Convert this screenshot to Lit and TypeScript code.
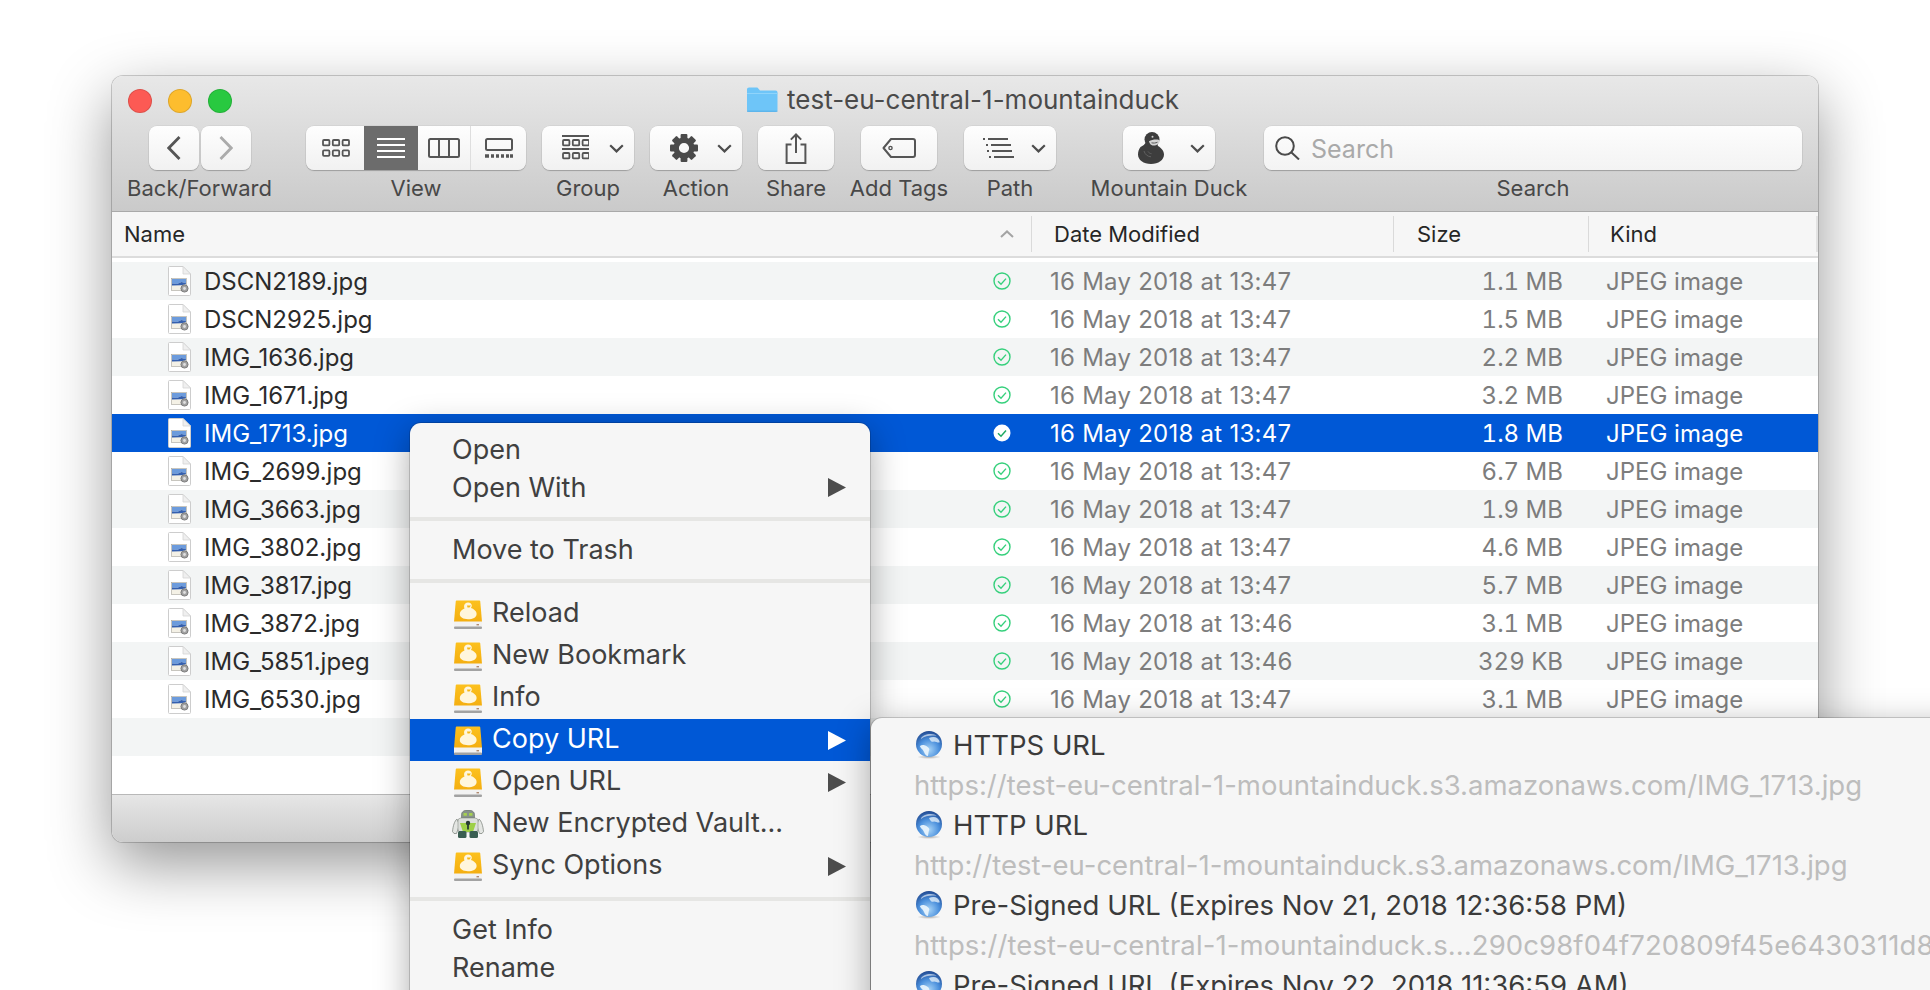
import { LitElement, html, css, svg } from "lit";
import { customElement } from "lit/decorators.js";

const FILES = [
  ["DSCN2189.jpg", "16 May 2018 at 13:47", "1.1 MB"],
  ["DSCN2925.jpg", "16 May 2018 at 13:47", "1.5 MB"],
  ["IMG_1636.jpg", "16 May 2018 at 13:47", "2.2 MB"],
  ["IMG_1671.jpg", "16 May 2018 at 13:47", "3.2 MB"],
  ["IMG_1713.jpg", "16 May 2018 at 13:47", "1.8 MB"],
  ["IMG_2699.jpg", "16 May 2018 at 13:47", "6.7 MB"],
  ["IMG_3663.jpg", "16 May 2018 at 13:47", "1.9 MB"],
  ["IMG_3802.jpg", "16 May 2018 at 13:47", "4.6 MB"],
  ["IMG_3817.jpg", "16 May 2018 at 13:47", "5.7 MB"],
  ["IMG_3872.jpg", "16 May 2018 at 13:46", "3.1 MB"],
  ["IMG_5851.jpeg", "16 May 2018 at 13:46", "329 KB"],
  ["IMG_6530.jpg", "16 May 2018 at 13:47", "3.1 MB"],
];
const SELECTED = 4;

const chevronDown = html`<svg class="chev" width="15" height="9" viewBox="0 0 15 9"><path d="M1.2 1.2 7.5 7.4 13.8 1.2" fill="none" stroke="#4d4d4d" stroke-width="2.2"/></svg>`;

const squares = (y: number) => svg`
  <rect x="1" y="${y}" width="6.4" height="5.4" rx="1"/><rect x="10.8" y="${y}" width="6.4" height="5.4" rx="1"/><rect x="20.6" y="${y}" width="6.4" height="5.4" rx="1"/>`;

const iconGrid = html`<svg width="28" height="20" viewBox="0 0 28 20" fill="none" stroke="#555" stroke-width="1.8">${squares(2)}${squares(12.4)}</svg>`;
const iconList = html`<svg width="28" height="20" viewBox="0 0 28 20" fill="#fff"><rect y="0" width="28" height="2"/><rect y="6" width="28" height="2"/><rect y="12" width="28" height="2"/><rect y="18" width="28" height="2"/></svg>`;
const iconColumns = html`<svg width="32" height="20" viewBox="0 0 32 20" fill="none" stroke="#555" stroke-width="2"><rect x="1" y="1" width="30" height="18" rx="1.5"/><path d="M11 1v18M21 1v18"/></svg>`;
const iconGallery = html`<svg width="28" height="20" viewBox="0 0 28 20" fill="none" stroke="#555" stroke-width="2"><rect x="1" y="1" width="26" height="11" rx="1.5"/><path d="M0 18h4M6 18h3M11 18h3M16 18h3M21 18h3M25 18h3" stroke-width="3.4"/></svg>`;
const iconGroup = html`<svg width="27" height="26" viewBox="0 0 27 26" fill="none" stroke="#555" stroke-width="1.8"><path d="M0 1h27M0 14h27" stroke-width="1.8"/>${squares(5)}${squares(18)}</svg>`;
const iconGear = html`<svg width="28" height="28" viewBox="-14 -14 28 28"><g fill="#4a4a4a">${[0, 45, 90, 135, 180, 225, 270, 315].map(
  (a) => svg`<rect x="-3.4" y="-14" width="6.8" height="8" rx="1" transform="rotate(${a})"/>`,
)}</g><circle r="7.8" fill="none" stroke="#4a4a4a" stroke-width="5.4"/></svg>`;
const iconShare = html`<svg width="22" height="31" viewBox="0 0 22 31" fill="none" stroke="#555" stroke-width="2"><path d="M6.5 11.5H1.6v18.4h18.8V11.5h-4.9"/><path d="M11 20V1.5M5.8 6.6 11 1.5l5.2 5.1"/></svg>`;
const iconTag = html`<svg width="34" height="20" viewBox="0 0 34 20" fill="none" stroke="#555" stroke-width="2"><path d="M9 1h22a2 2 0 0 1 2 2v14a2 2 0 0 1-2 2H9L1.5 10z" stroke-linejoin="round"/><circle cx="8.5" cy="10" r="1.6" stroke-width="1.4"/></svg>`;
const iconPath = html`<svg width="31" height="20" viewBox="0 0 31 20" fill="none" stroke="#555" stroke-width="1.8"><path d="M0 1h2M5 1h20M3 7h2M8 7h20M4 13h2M9 13h20M6 19h2M11 19h20"/></svg>`;
const iconDuck = html`<svg width="26" height="32" viewBox="0 0 26 32">
  <circle cx="14" cy="7.5" r="7.5" fill="#3d3d3d"/>
  <path d="M8 10C7 12 5 14 2.500 15 .8 17 0 20 0 22.500 0 28 5.500 32 13 32s13-4 13-9.500c0-3.500-2.500-6.500-6-8.500l-1-3z" fill="#3d3d3d"/>
  <path d="M11 9.200c3-1.500 6.500-2 10.200-1.300.8 1.800.2 3.200-1.200 4-2 1.700-4.500 2.200-6.500 1.200-1.300-.8-2.100-2.300-2.500-3.900z" fill="#d4d4d4"/>
  <path d="M13.500 10.800c2 .5 4 .3 6-.6" fill="none" stroke="#5a5a5a" stroke-width="1"/>
  <circle cx="14.500" cy="4.700" r="1" fill="#cfcfcf"/>
  <path d="M6 19c1 3.500 3.500 5.500 7 5.800M10 19.500c.8 1.300 2 2 3.500 2.200" fill="none" stroke="#616161" stroke-width="1"/>
</svg>`;
const iconSearch = html`<svg width="25" height="24" viewBox="0 0 25 24" fill="none" stroke="#4a4a4a" stroke-width="2"><circle cx="10" cy="10" r="8.800"/><path d="M16.500 16.500 24 23.500"/></svg>`;

const iconFolder = html`<svg width="32" height="25" viewBox="0 0 32 25"><path d="M1 4.500V2.500C1 1.400 1.800.5 3 .5h7.500c1 0 1.500.5 2 1.200L14 3.500h15.500c1.200 0 2 .8 2 2V23c0 1.100-.8 2-2 2H3c-1.200 0-2-.9-2-2z" fill="#6ec5f8"/><path d="M1 6.500h30.500" stroke="#8fd4fb" stroke-width="1"/><path d="M1 24.200h30.500" stroke="#56aee6" stroke-width="1"/></svg>`;

const iconFile = html`<svg class="file" width="23" height="30" viewBox="0 0 23 30">
  <path d="M.5 1.500A1 1 0 0 1 1.500.5H15l7.500 7.500v20.500a1 1 0 0 1-1 1H1.500a1 1 0 0 1-1-1z" fill="#fff" stroke="#cdcdcd"/>
  <path d="M15 .5V8h7.500z" fill="#efefef" stroke="#d4d4d4" stroke-width=".8"/>
  <rect x="3.500" y="12.500" width="15" height="12" fill="#f4f1e6" stroke="#a5a39c" stroke-width=".6"/>
  <path d="M4 13h14v4.300l-4.500-1.300-4.500 2L4 17.400z" fill="#6c9bdc"/>
  <path d="M4 17.400l5 .6 4.500-2 4.500 1.300v1l-5 1-9 .3z" fill="#345fae"/>
  <circle cx="16.500" cy="22.500" r="3.600" fill="#a2a2a2" stroke="#6e6e6e" stroke-width=".8"/>
  <circle cx="16.500" cy="22.500" r="1.400" fill="#e0e0e0"/>
</svg>`;

const iconDrive = html`<svg width="28" height="29" viewBox="0 0 28 29">
  <defs><linearGradient id="dr" x1="0" y1="0" x2="0" y2="1"><stop offset="0" stop-color="#fcc11e"/><stop offset="1" stop-color="#f4ae10"/></linearGradient></defs>
  <path d="M3 .5h22c.8 0 1.200.5 1.300 1.200L28 22H0L1.700 1.700C1.800 1 2.200.5 3 .5z" fill="url(#dr)"/>
  <rect x="0" y="21.500" width="28" height="5.500" fill="#f2f2f2"/>
  <rect x="0" y="26.500" width="28" height="2.500" rx="1" fill="#a2a2a2"/>
  <rect x="22.500" y="24" width="2.500" height="1.400" fill="#b08a70"/>
  <path d="M14 2.500c2.500 0 3.800 1.700 3.800 3.300 0 1-.4 1.700-1 2.300 2.800.8 5.800 3 5.800 5.800 0 3.400-3.800 5.300-8.600 5.300S5.800 17.300 5.800 14c0-2.400 2-4.400 4.700-5.500-.4-.8-.5-1.700-.4-2.700.2-2 1.800-3.300 3.900-3.300z" fill="#fff6dc"/>
  <path d="M13 5.400h4l-1.500 2h-2z" fill="#f6b816"/>
</svg>`;

const iconVault = html`<svg class="vault" width="32" height="28" viewBox="0 0 32 28">
  <path d="M9.500 8V4.500C9.500 2 12 0 16 0s6.500 2 6.500 4.500V8z" fill="#87928a" stroke="#5f6a62" stroke-width=".6"/>
  <rect x="11.500" y="3" width="3.400" height="2.800" rx=".6" fill="#a6d24e"/><rect x="17.100" y="3" width="3.400" height="2.800" rx=".6" fill="#a6d24e"/>
  <path d="M5 9C2.500 11 1 16 .5 21.500l1.500 2h2.500L7.500 15z" fill="#e4e6e3" stroke="#767c76" stroke-width=".7"/>
  <path d="M27 9c2.500 2 4 7 4.500 12.500l-1.500 2h-2.500L24.500 15z" fill="#e4e6e3" stroke="#767c76" stroke-width=".7"/>
  <rect x="6" y="8" width="20" height="14" rx="3" fill="#dcdfdb" stroke="#8a908a" stroke-width=".6"/>
  <path d="M8 13h16l-3 9H11z" fill="#9ed048"/>
  <circle cx="16" cy="13" r="2.200" fill="#273a33"/><rect x="15.100" y="14" width="1.800" height="5.500" fill="#273a33"/>
  <rect x="6" y="21" width="8.500" height="7" rx="1.500" fill="#3a5e52"/><rect x="17.500" y="21" width="8.500" height="7" rx="1.500" fill="#3a5e52"/>
</svg>`;

const iconGlobe = html`<svg width="26" height="28" viewBox="0 0 26 28">
  <defs>
    <radialGradient id="gl" cx=".5" cy=".72" r=".72"><stop offset="0" stop-color="#a6d3f7"/><stop offset=".55" stop-color="#4a8fdc"/><stop offset="1" stop-color="#20488f"/></radialGradient>
    <radialGradient id="sh" cx=".5" cy=".5" r=".5"><stop offset="0" stop-color="#000" stop-opacity=".3"/><stop offset="1" stop-color="#000" stop-opacity="0"/></radialGradient>
  </defs>
  <ellipse cx="13" cy="26" rx="12" ry="2" fill="url(#sh)"/>
  <circle cx="13" cy="13" r="13" fill="url(#gl)"/>
  <path d="M8 21c-1-3-4-4-4-6 2-1.500 5-1 7 .5 2 1 3 3 1.800 4.500L12 25c-2 0-3.200-2-4-4z" fill="#e8f3fc" opacity=".95"/>
  <path d="M13 7c2.500-1 6-1.500 8 0 2 1.500 3 3.500 2.500 4.500-2 .5-3.500-.8-5.500-1-1.500 1-3.500 0-5-3.500z" fill="#e4eff9" opacity=".8"/>
  <path d="M5 8c-.2-2 3.500-4.500 8-5 3.500-.4 6.500.6 7.500 2-4-1-11-.5-15.500 3z" fill="#fff" opacity=".6"/>
</svg>`;

const triangle = html`<svg class="tri" width="18" height="19" viewBox="0 0 18 19"><path d="M0 0 18 9.500 0 19z"/></svg>`;

@customElement("app-root")
export class AppRoot extends LitElement {
  static styles = css`
    :host {
      display: block;
      position: relative;
      width: 1930px;
      height: 990px;
      overflow: hidden;
      background: #fff;
      font-family: Inter, "Liberation Sans", sans-serif;
    }
    .page {
      padding: 76px 0 0 112px;
    }
    .window {
      width: 1706px;
      height: 766px;
      border-radius: 11px;
      overflow: hidden;
      display: flex;
      flex-direction: column;
      box-sizing: border-box;
    }
    .shadow {
      width: 1706px;
      border-radius: 11px;
      box-shadow: 0 22px 62px rgba(0, 0, 0, 0.42), 0 0 0 1px rgba(0, 0, 0, 0.18);
    }
    .chrome {
      height: 136px;
      flex: none;
      box-sizing: border-box;
      background: linear-gradient(#e8e8e8, #cacaca);
      border-bottom: 1px solid #a9a9a9;
      display: flex;
      flex-direction: column;
    }
    .titlebar {
      height: 50px;
      display: flex;
      align-items: center;
      padding-left: 16px;
      position: relative;
    }
    .lights {
      display: flex;
      gap: 16px;
    }
    .light {
      width: 24px;
      height: 24px;
      border-radius: 50%;
      box-sizing: border-box;
      border: 1px solid rgba(0, 0, 0, 0.12);
    }
    .red { background: #fc5a54; }
    .yellow { background: #fdbd2e; }
    .green { background: #28c940; }
    .title {
      position: absolute;
      left: 634px;
      top: 8px;
      display: flex;
      align-items: center;
      gap: 9px;
      font-size: 26px;
      color: #4a4a4a;
      white-space: nowrap;
    }
    .toolbar {
      display: flex;
      padding-left: 16px;
      gap: 16px;
    }
    .tool {
      flex: none;
      display: flex;
      flex-direction: column;
      align-items: center;
    }
    .controls {
      height: 44px;
      display: flex;
      gap: 2px;
    }
    .btn {
      height: 44px;
      box-sizing: border-box;
      display: flex;
      align-items: center;
      justify-content: center;
      border-radius: 8px;
      background: linear-gradient(#fefefe, #f1f1f1);
      box-shadow: 0 1px 1px rgba(0, 0, 0, 0.22), 0 0 0 0.5px rgba(0, 0, 0, 0.08);
    }
    .nav { width: 50px; }
    .wide { width: 76px; }
    .drop {
      width: 92px;
      justify-content: flex-start;
      padding: 0 10px 0 20px;
    }
    .drop .chev { margin-left: auto; }
    .drop.tight { padding-left: 19px; }
    .drop.duck { padding-left: 15px; }
    .segment {
      display: flex;
      width: 220px;
      height: 44px;
      border-radius: 8px;
      overflow: hidden;
      background: linear-gradient(#fefefe, #f1f1f1);
      box-shadow: 0 1px 1px rgba(0, 0, 0, 0.22), 0 0 0 0.5px rgba(0, 0, 0, 0.08);
    }
    .seg {
      display: flex;
      align-items: center;
      justify-content: center;
      box-sizing: border-box;
    }
    .seg.s1 { width: 58px; padding-left: 2px; }
    .seg.s2 { width: 54px; background: #6c6c6c; }
    .seg.s3 { width: 53px; border-right: 1px solid #dedede; }
    .seg.s4 { width: 55px; }
    .label {
      font-size: 22px;
      line-height: 26px;
      margin-top: 5px;
      color: #484848;
      white-space: nowrap;
    }
    .search {
      width: 538px;
      height: 44px;
      box-sizing: border-box;
      display: flex;
      align-items: center;
      gap: 11px;
      padding-left: 11px;
      border-radius: 8px;
      background: linear-gradient(#fdfdfd, #f3f3f3);
      box-shadow: 0 1px 1px rgba(0, 0, 0, 0.22), 0 0 0 0.5px rgba(0, 0, 0, 0.08);
      font-size: 25px;
      color: #a9a9a9;
    }
    .search span { padding-top: 2px; }
    .grid {
      display: grid;
      grid-template-columns: 919px 362px 195px 1fr;
    }
    .head {
      height: 46px;
      flex: none;
      box-sizing: border-box;
      background: #f6f6f6;
      border-bottom: 2px solid #dcdcdc;
      font-size: 22px;
      color: #262626;
      align-items: center;
    }
    .head > div {
      box-sizing: border-box;
      height: 36px;
      display: flex;
      align-items: center;
    }
    .head .sep {
      border-left: 1px solid #dadada;
    }
    .head .name {
      padding: 0 17px 0 12px;
      justify-content: space-between;
    }
    .head .date { padding-left: 22px; }
    .head .size { padding-left: 23px; }
    .head .kind { padding-left: 21px; border-right: 2px solid #e3e3e3; }
    .list {
      flex: 1;
      background: #fff;
      padding-top: 4px;
      font-size: 24px;
    }
    .row {
      height: 38px;
      align-items: center;
      color: #7d7d7d;
    }
    .row.odd { background: #f3f5f5; }
    .row.sel { background: #0058d6; color: #fff; }
    .cell-name {
      display: flex;
      align-items: center;
      padding: 0 20px 0 56px;
      color: #2b2b2b;
    }
    .sel .cell-name { color: #fff; }
    .cell-name .text { margin-left: 13px; flex: 1; }
    .cell-date { padding-left: 19px; letter-spacing: 0.25px; }
    .cell-size {
      text-align: right;
      padding-right: 25px;
      font-variant-numeric: tabular-nums;
    }
    .cell-kind { padding-left: 18px; }
    .status {
      height: 48px;
      flex: none;
      box-sizing: border-box;
      border-top: 1px solid #b8b8b8;
      background: linear-gradient(#e6e6e6, #cdcdcd);
    }
    .menu, .submenu {
      position: absolute;
      background: #f6f6f6;
      box-shadow: 0 8px 34px rgba(0, 0, 0, 0.34), 0 0 0 1px rgba(0, 0, 0, 0.16);
      color: #404040;
      white-space: nowrap;
    }
    .menu {
      left: 410px;
      top: 423px;
      width: 460px;
      height: 620px;
      box-sizing: border-box;
      padding-top: 7px;
      border-radius: 11px 11px 0 0;
      font-size: 27px;
    }
    .mi {
      height: 38px;
      display: flex;
      align-items: center;
      padding-left: 42px;
    }
    .mi.with-icon {
      height: 42px;
      padding-left: 44px;
      gap: 10px;
    }
    .mi.with-icon span { padding-bottom: 3px; }
    .mi.active { background: #0058d6; color: #fff; }
    .mi .vault { margin: 0 -2px; }
    .tri {
      margin-left: auto;
      margin-right: 24px;
      fill: #4d4d4d;
    }
    .active .tri { fill: #fff; }
    .msep {
      height: 4px;
      background: #e6e6e4;
      margin: 11px 0 9px;
    }
    .msep.second { margin: 11px 0 10px; }
    .msep.last { margin: 10px 0 9px; }
    .submenu {
      left: 871px;
      top: 718px;
      width: 1100px;
      height: 320px;
      box-sizing: border-box;
      padding-top: 7px;
      border-radius: 11px 0 0 0;
      font-size: 27.5px;
    }
    .si {
      height: 40px;
      display: flex;
      align-items: center;
      padding-left: 45px;
      gap: 11px;
      color: #3b3b3b;
    }
    .su {
      height: 40px;
      display: flex;
      align-items: center;
      padding-left: 43px;
      color: #bdbdbd;
    }
    .su.long { letter-spacing: 0.1px; }
  `;

  private tool(label: string, width: number, lead: number, control: unknown) {
    return html`<div class="tool" style="width:${width}px;margin-left:${lead}px">
      ${control}
      <div class="label">${label}</div>
    </div>`;
  }

  private renderToolbar() {
    return html`<div class="toolbar">
      ${this.tool(
        "Back/Forward",
        143,
        0,
        html`<div class="controls">
          <div class="btn nav"><svg width="14" height="24" viewBox="0 0 14 24"><path d="M12.500 1 1.800 12l10.700 11" fill="none" stroke="#555" stroke-width="2.800"/></svg></div>
          <div class="btn nav"><svg width="14" height="24" viewBox="0 0 14 24"><path d="M1.500 1 12.200 12 1.500 23" fill="none" stroke="#ababab" stroke-width="2.800"/></svg></div>
        </div>`,
      )}
      ${this.tool(
        "View",
        220,
        19,
        html`<div class="segment">
          <div class="seg s1">${iconGrid}</div>
          <div class="seg s2">${iconList}</div>
          <div class="seg s3">${iconColumns}</div>
          <div class="seg s4">${iconGallery}</div>
        </div>`,
      )}
      ${this.tool("Group", 92, 0, html`<div class="btn drop">${iconGroup}${chevronDown}</div>`)}
      ${this.tool("Action", 92, 0, html`<div class="btn drop">${iconGear}${chevronDown}</div>`)}
      ${this.tool("Share", 76, 0, html`<div class="btn wide">${iconShare}</div>`)}
      ${this.tool("Add Tags", 96, 1, html`<div class="btn wide">${iconTag}</div>`)}
      ${this.tool("Path", 92, 1, html`<div class="btn drop tight">${iconPath}${chevronDown}</div>`)}
      ${this.tool("Mountain Duck", 156, 19, html`<div class="btn drop duck">${iconDuck}${chevronDown}</div>`)}
      ${this.tool(
        "Search",
        538,
        1,
        html`<div class="search">${iconSearch}<span>Search</span></div>`,
      )}
    </div>`;
  }

  private renderRow(file: string[], i: number) {
    const sel = i === SELECTED;
    return html`<div class="grid row ${i % 2 === 0 ? "odd" : ""} ${sel ? "sel" : ""}">
      <div class="cell-name">
        ${iconFile}
        <span class="text">${file[0]}</span>
        ${sel
          ? html`<svg width="18" height="18" viewBox="0 0 18 18"><circle cx="9" cy="9" r="8.500" fill="#fff"/><path d="M5 9.200l3 3 5-5.600" fill="none" stroke="#1fa862" stroke-width="1.500"/></svg>`
          : html`<svg width="18" height="18" viewBox="0 0 18 18"><circle cx="9" cy="9" r="8" fill="none" stroke="#36d07c" stroke-width="1.400"/><path d="M5 9.200l3 3 5-5.600" fill="none" stroke="#36d07c" stroke-width="1.400"/></svg>`}
      </div>
      <div class="cell-date">${file[1]}</div>
      <div class="cell-size">${file[2]}</div>
      <div class="cell-kind">JPEG image</div>
    </div>`;
  }

  private renderMenu() {
    const item = (text: string, icon: unknown, arrow = false, active = false) =>
      html`<div class="mi with-icon ${active ? "active" : ""}">
        ${icon}<span>${text}</span>${arrow ? triangle : ""}
      </div>`;
    return html`<div class="menu">
      <div class="mi">Open</div>
      <div class="mi">Open With ${triangle}</div>
      <div class="msep"></div>
      <div class="mi">Move to Trash</div>
      <div class="msep second"></div>
      ${item("Reload", iconDrive)}
      ${item("New Bookmark", iconDrive)}
      ${item("Info", iconDrive)}
      ${item("Copy URL", iconDrive, true, true)}
      ${item("Open URL", iconDrive, true)}
      ${item("New Encrypted Vault...", iconVault)}
      ${item("Sync Options", iconDrive, true)}
      <div class="msep last"></div>
      <div class="mi">Get Info</div>
      <div class="mi">Rename</div>
    </div>`;
  }

  private renderSubmenu() {
    const entries = [
      ["HTTPS URL", "https://test-eu-central-1-mountainduck.s3.amazonaws.com/IMG_1713.jpg", ""],
      ["HTTP URL", "http://test-eu-central-1-mountainduck.s3.amazonaws.com/IMG_1713.jpg", ""],
      [
        "Pre-Signed URL (Expires Nov 21, 2018 12:36:58 PM)",
        "https://test-eu-central-1-mountainduck.s...290c98f04f720809f45e6430311d8",
        "long",
      ],
      ["Pre-Signed URL (Expires Nov 22, 2018 11:36:59 AM)", "", ""],
    ];
    return html`<div class="submenu">
      ${entries.map(
        ([name, url, kind]) => html`<div class="si">${iconGlobe}<span>${name}</span></div>
          <div class="su ${kind}">${url}</div>`,
      )}
    </div>`;
  }

  render() {
    return html`<div class="page">
        <div class="shadow">
          <div class="window">
            <div class="chrome">
              <div class="titlebar">
                <div class="lights">
                  <div class="light red"></div>
                  <div class="light yellow"></div>
                  <div class="light green"></div>
                </div>
                <div class="title">${iconFolder}<span>test-eu-central-1-mountainduck</span></div>
              </div>
              ${this.renderToolbar()}
            </div>
            <div class="grid head">
              <div class="name">
                <span>Name</span>
                <svg width="14" height="8" viewBox="0 0 14 8"><path d="M1 7l6-5.600L13 7" fill="none" stroke="#a4a4a4" stroke-width="2"/></svg>
              </div>
              <div class="sep date">Date Modified</div>
              <div class="sep size">Size</div>
              <div class="sep kind">Kind</div>
            </div>
            <div class="list">
              ${FILES.map((f, i) => this.renderRow(f, i))}
              <div class="row odd"></div>
            </div>
            <div class="status"></div>
          </div>
        </div>
      </div>
      ${this.renderMenu()} ${this.renderSubmenu()}`;
  }
}

declare global {
  interface HTMLElementTagNameMap {
    "app-root": AppRoot;
  }
}
